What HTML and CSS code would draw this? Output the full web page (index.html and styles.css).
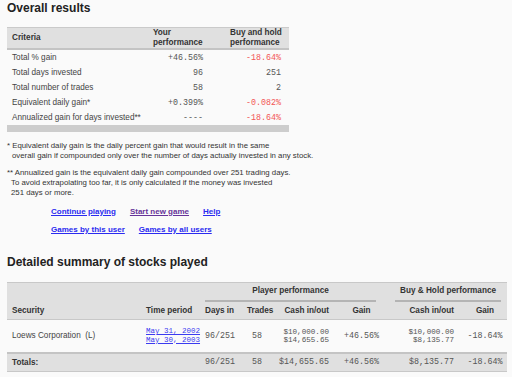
FILE: index.html
```html
<!DOCTYPE html>
<html lang="en">
<head>
<meta charset="utf-8">
<title>Overall results</title>
<link rel="stylesheet" href="styles.css">
</head>
<body>
<h2 class="title">Overall results</h2>
<table class="overall">
  <colgroup><col class="c1"><col class="c2"><col class="c3"></colgroup>
  <thead>
    <tr><th class="crit">Criteria</th><th class="yours">Your<br>performance</th><th class="bh">Buy and hold<br>performance</th></tr>
  </thead>
  <tbody>
    <tr><td>Total % gain</td><td class="num">+46.56%</td><td class="num bh neg">-18.64%</td></tr>
    <tr><td>Total days invested</td><td class="num">96</td><td class="num bh">251</td></tr>
    <tr><td>Total number of trades</td><td class="num">58</td><td class="num bh">2</td></tr>
    <tr><td>Equivalent daily gain*</td><td class="num">+0.399%</td><td class="num bh neg">-0.082%</td></tr>
    <tr><td>Annualized gain for days invested**</td><td class="num">----</td><td class="num bh neg">-18.64%</td></tr>
  </tbody>
  <tfoot><tr><td colspan="3" class="bar"></td></tr></tfoot>
</table>

<p class="note one">* Equivalent daily gain is the daily percent gain that would result in the same<br>overall gain if compounded only over the number of days actually invested in any stock.</p>
<p class="note two">** Annualized gain is the equivalent daily gain compounded over 251 trading days.<br>To avoid extrapolating too far, it is only calculated if the money was invested<br>251 days or more.</p>

<nav class="links">
  <div class="link-row"><a href="#">Continue playing</a><a href="#" class="visited">Start new game</a><a href="#">Help</a></div>
  <div class="link-row"><a href="#">Games by this user</a><a href="#">Games by all users</a></div>
</nav>

<h2 class="title detailed">Detailed summary of stocks played</h2>
<table class="detail">
  <colgroup>
    <col class="d-sec"><col class="d-time"><col class="d-days"><col class="d-trades"><col class="d-cash"><col class="d-gain"><col class="d-gap"><col class="d-bcash"><col class="d-bgain">
  </colgroup>
  <thead>
    <tr class="grp">
      <th rowspan="2" class="left">Security</th>
      <th rowspan="2" class="left time">Time period</th>
      <th colspan="4" class="group"><div class="group-label player">Player performance</div></th>
      <th rowspan="2"></th>
      <th colspan="2" class="group"><div class="group-label hold">Buy &amp; Hold performance</div></th>
    </tr>
    <tr class="sub">
      <th class="left days">Days in</th>
      <th class="center">Trades</th>
      <th class="right">Cash in/out</th>
      <th class="center gain">Gain</th>
      <th class="right">Cash in/out</th>
      <th class="center bgain">Gain</th>
    </tr>
  </thead>
  <tbody>
    <tr class="data">
      <td class="sec">Loews Corporation&nbsp; (L)</td>
      <td class="time"><a href="#" class="date">May 31, 2002</a><br><a href="#" class="date">May 30, 2003</a></td>
      <td class="mono days">96/251</td>
      <td class="mono center">58</td>
      <td class="mono right small">$10,000.00<br>$14,655.65</td>
      <td class="mono center gain">+46.56%</td>
      <td></td>
      <td class="mono right small">$10,000.00<br>$8,135.77</td>
      <td class="mono center bgain neg">-18.64%</td>
    </tr>
    <tr class="totals">
      <td class="sec strong">Totals:</td>
      <td></td>
      <td class="mono days">96/251</td>
      <td class="mono center">58</td>
      <td class="mono right">$14,655.65</td>
      <td class="mono center gain">+46.56%</td>
      <td></td>
      <td class="mono right">$8,135.77</td>
      <td class="mono center bgain neg">-18.64%</td>
    </tr>
  </tbody>
</table>
</body>
</html>
```
FILE: styles.css
```css
html, body {
  margin: 0;
  padding: 0;
  background: #fafafa;
}
body {
  padding: 0 7px;
  font-family: "Liberation Sans", Arial, sans-serif;
  font-size: 8px;
  color: #444;
}
.title {
  margin: 1px 0 12px;
  font-size: 12px;
  line-height: 14px;
  font-weight: bold;
  color: #222;
}
.title.detailed {
  margin-top: 20px;
  margin-bottom: 13px;
}

/* overall results */
.overall {
  border-collapse: collapse;
  width: 282px;
  table-layout: fixed;
}
.overall .c1 { width: 141px; }
.overall .c2 { width: 60px; }
.overall .c3 { width: 81px; }
.overall th {
  background: #e0e0e0;
  border-top: 1px solid #cacaca;
  border-bottom: 2px solid #c4c4c4;
  padding: 0 5px;
  text-align: left;
  font-size: 8.2px;
  font-weight: bold;
  line-height: 10px;
  color: #333;
  vertical-align: middle;
  white-space: nowrap;
}
.overall th.bh { padding-left: 22px; padding-right: 8px; }
.overall td {
  height: 15px;
  padding: 0 5px;
  font-size: 8.2px;
  line-height: 10px;
  vertical-align: middle;
  white-space: nowrap;
}
.overall td.bh { padding-left: 22px; padding-right: 8px; }
.overall td.num,
.num {
  text-align: right;
  font-family: "Liberation Mono", "Courier New", monospace;
  font-size: 8.33px;
  color: #555;
}
.overall td.neg,
.neg { color: #f25555; }
.overall td.bar {
  height: 7px;
  padding: 0;
  background: #cdcdcd;
}

/* notes */
.note {
  margin: 0;
  font-size: 7.8px;
  line-height: 9.7px;
  color: #333;
  white-space: nowrap;
}
.note.one {
  margin-top: 9px;
  padding-left: 5px;
  text-indent: -5px;
}
.note.two {
  margin-top: 8px;
  padding-left: 4px;
  text-indent: -4px;
}

/* links */
.links {
  margin-top: 9px;
  padding-left: 44px;
  display: flex;
  flex-direction: column;
  gap: 8px;
}
.link-row {
  display: flex;
  gap: 14px;
  line-height: 10px;
}
.link-row a {
  color: #2b2bf0;
  font-weight: bold;
  text-decoration: underline;
}
.link-row a.visited { color: #663399; }

/* detail table */
.detail {
  border-collapse: collapse;
  width: 500px;
  table-layout: fixed;
}
.d-sec { width: 134px; }
.d-time { width: 61px; }
.d-days { width: 40px; }
.d-trades { width: 30px; }
.d-cash { width: 62px; }
.d-gain { width: 47px; }
.d-gap { width: 14px; }
.d-bcash { width: 64px; }
.d-bgain { width: 48px; }

.detail th {
  background: #e0e0e0;
  font-size: 8.2px;
  font-weight: bold;
  color: #333;
  line-height: 10px;
  padding: 0 5px;
  white-space: nowrap;
}
.detail tr.grp th {
  border-top: 1px solid #c8c8c8;
  vertical-align: bottom;
  padding-bottom: 3px;
}
.detail tr.grp th.group {
  padding: 3px 0 0;
  vertical-align: top;
}
.group-label {
  text-align: center;
  padding-bottom: 4px;
  border-bottom: 2px solid #b4b4b4;
}
.group-label.player { margin: 0 5px 0 3px; }
.group-label.hold { margin: 0 6px 0 0; }
.detail tr.sub th {
  padding-top: 4px;
  padding-bottom: 3px;
}
.detail thead tr.sub th,
.detail thead tr.grp th[rowspan] {
  border-bottom: 1px solid #c8c8c8;
}
.detail .left { text-align: left; }
.detail .right { text-align: right; }
.detail .center { text-align: center; }
.detail .time { padding-left: 5px; padding-right: 0; }
.detail .days { padding-left: 3px; padding-right: 0; text-align: left; }
.detail .gain { padding-left: 8px; padding-right: 0; }
.detail .bgain { padding-left: 4px; padding-right: 0; }

.detail td {
  padding: 0 5px;
  vertical-align: middle;
  white-space: nowrap;
}
.detail tr.data td {
  height: 32px;
  border-bottom: 2px solid #c4c4c4;
}
.detail tr.totals td {
  height: 17px;
  background: #e0e0e0;
  border-bottom: 1px solid #c8c8c8;
}
.detail .sec { color: #444; font-size: 8.2px; }
.detail .strong { font-weight: bold; color: #333; }
.mono {
  font-family: "Liberation Mono", "Courier New", monospace;
  font-size: 8.33px;
  color: #555;
}
.mono.small {
  font-size: 7.6px;
  line-height: 8px;
}
.date {
  font-family: "Liberation Mono", "Courier New", monospace;
  font-size: 7.5px;
  line-height: 7.5px;
  color: #3b3bf0;
  text-decoration: underline;
}
.detail td.time { line-height: 7.5px; }
```
